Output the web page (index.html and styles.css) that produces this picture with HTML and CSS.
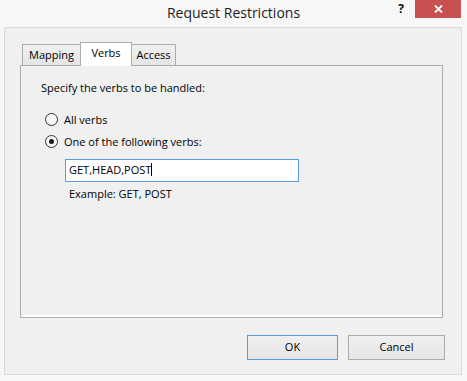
FILE: index.html
```html
<!DOCTYPE html>
<html lang="en">
<head>
  <meta charset="UTF-8">
  <title>Request Restrictions</title>
  <link rel="stylesheet" href="styles.css">
</head>
<body>
  <div class="dialog">
    <div class="titlebar">
      <div class="title">Request Restrictions</div>
      <div class="controls">
        <span class="help">?</span>
        <span class="close">
          <svg viewBox="0 0 9 8" width="9" height="8">
            <path d="M1 0.5 8 7.5 M8 0.5 1 7.5" stroke="#fff" stroke-width="1.8" fill="none"></path>
          </svg>
        </span>
      </div>
    </div>

    <div class="client">
      <div class="tabs">
        <div class="tab tab-mapping">Mapping</div>
        <div class="tab tab-verbs active">Verbs</div>
        <div class="tab tab-access">Access</div>
      </div>

      <div class="panel">
        <p class="intro">Specify the verbs to be handled:</p>
        <div class="option"><span class="radio"></span>All verbs</div>
        <div class="option"><span class="radio checked"></span>One of the following verbs:</div>
        <div class="textbox">GET,HEAD,POST<span class="caret"></span></div>
        <p class="hint">Example: GET, POST</p>
      </div>

      <div class="buttons">
        <button class="btn btn-ok">OK</button>
        <button class="btn btn-cancel">Cancel</button>
      </div>
    </div>
  </div>
</body>
</html>
```

FILE: styles.css
```css
* {
  box-sizing: border-box;
}

body {
  margin: 0;
  font-family: 'Open Sans', 'Noto Sans', sans-serif;
  font-size: 11px;
  color: #000;
}

.dialog {
  width: 467px;
  height: 381px;
  background: #f7f7f7;
  display: flex;
  flex-direction: column;
}

.titlebar {
  height: 27px;
  display: grid;
  grid-template-columns: 1fr auto 1fr;
}

.title {
  grid-column: 2;
  font-size: 14px;
  line-height: 20px;
  padding-top: 3px;
  color: #1e1e1e;
}

.controls {
  grid-column: 3;
  justify-self: end;
  display: flex;
  align-items: flex-start;
  margin-right: 6px;
}

.help {
  width: 26px;
  padding-right: 2px;
  text-align: center;
  font-weight: bold;
  font-size: 12px;
  line-height: 18px;
  color: #111;
}

.close {
  width: 46px;
  height: 18px;
  background: #c75050;
  display: flex;
  align-items: center;
  justify-content: center;
}

.close svg {
  display: block;
}

.client {
  flex: 1;
  margin: 0 5px 6px 4px;
  border: 1px solid #dadada;
  background: #f0f0f0;
  padding: 14px 18px 0 15px;
  display: flex;
  flex-direction: column;
}

.tabs {
  height: 23px;
  display: flex;
  align-items: flex-end;
  margin-left: 2px;
}

.tab {
  height: 21px;
  border: 1px solid #acacac;
  border-bottom: 0;
  background: linear-gradient(#f0f0f0, #e5e5e5);
  line-height: 20px;
  text-align: center;
}

.tab + .tab {
  margin-left: -1px;
}

.tab-mapping {
  width: 59px;
}

.tab-verbs {
  width: 52px;
}

.tab-access {
  width: 45px;
}

.tab.active {
  height: 24px;
  margin-bottom: -1px;
  background: #fff;
  position: relative;
  z-index: 1;
}

.panel {
  height: 253px;
  border: 1px solid #acacac;
  box-shadow: inset 0 -2px 0 #fff;
  padding: 14px 20px 0 20px;
}

.intro {
  margin: 0 0 13px;
  line-height: 15px;
}

.option {
  height: 22px;
  display: flex;
  align-items: center;
  margin-left: 4px;
  line-height: 15px;
}

.radio {
  width: 13px;
  height: 13px;
  margin-right: 6px;
  border: 1px solid #333;
  border-radius: 50%;
  background: linear-gradient(#fff, #f0f0f0);
  display: flex;
  align-items: center;
  justify-content: center;
}

.radio.checked::after {
  content: "";
  width: 5px;
  height: 5px;
  border-radius: 50%;
  background: #1a1a1a;
}

.textbox {
  width: 234px;
  height: 23px;
  margin: 7px 0 0 24px;
  border: 1px solid #569de5;
  background: #fff;
  padding: 1px 3px 0;
  line-height: 17px;
}

.caret {
  display: inline-block;
  width: 1px;
  height: 13px;
  background: #000;
  vertical-align: -2px;
}

.hint {
  margin: 4px 0 0 28px;
  line-height: 15px;
}

.buttons {
  display: flex;
  justify-content: flex-end;
  gap: 10px;
  margin: 17px -2px 0 0;
}

.btn {
  height: 25px;
  padding: 0 0 2px;
  border: 1px solid #acacac;
  background: linear-gradient(#f0f0f0, #e5e5e5);
  font-family: inherit;
  font-size: 11px;
  line-height: 21px;
  color: #000;
}

.btn-ok {
  width: 91px;
  border-color: #569de5;
}

.btn-cancel {
  width: 97px;
}
```
